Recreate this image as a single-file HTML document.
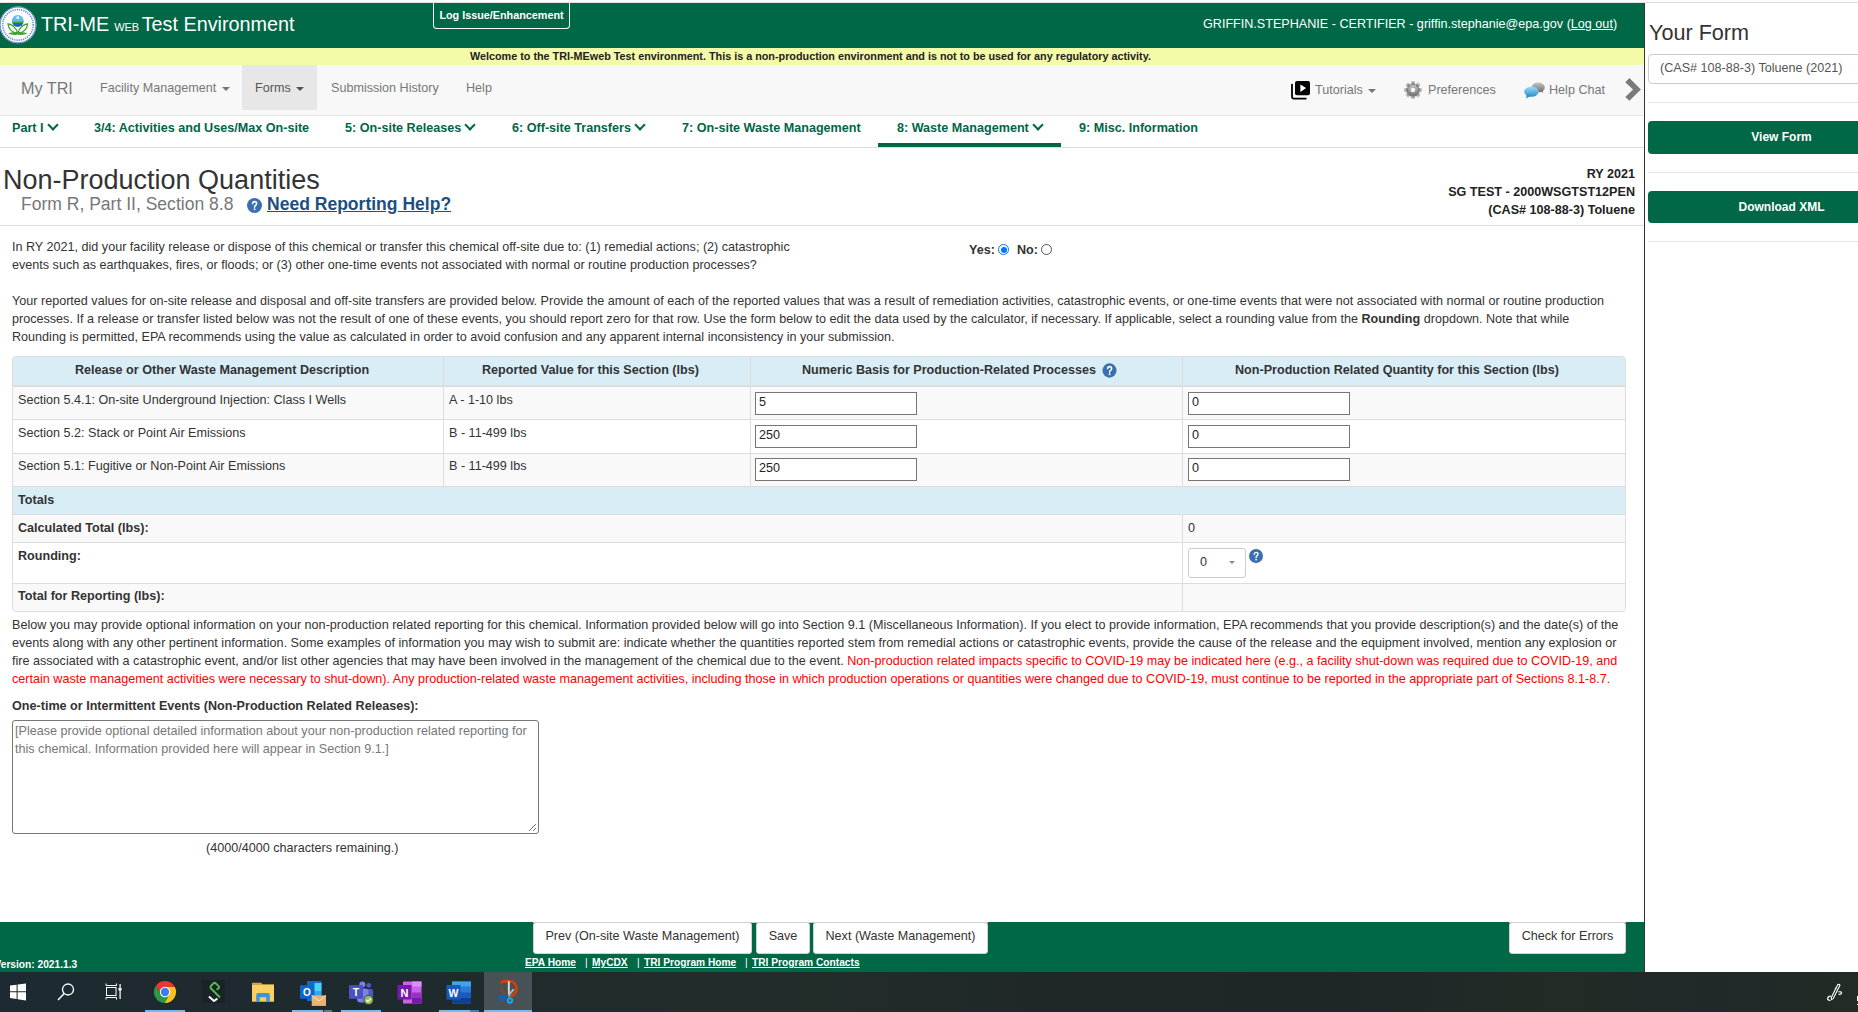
<!DOCTYPE html>
<html><head><meta charset="utf-8">
<style>
*{box-sizing:border-box}
html,body{margin:0;padding:0;width:1858px;height:1012px;overflow:hidden;background:#fff;font-family:"Liberation Sans",sans-serif;font-size:12.6px;color:#333}
.a{position:absolute;white-space:nowrap}
.g{background:#006747}
.b{font-weight:bold}
#topline{position:absolute;left:0;top:2px;width:1858px;height:1px;background:#e3e3e3}
#hdr{position:absolute;left:0;top:3px;width:1644px;height:45px;background:#006747}
#yel{position:absolute;left:0;top:48px;width:1644px;height:17px;background:#f4fba8;border-bottom-right-radius:3px}
#nav{position:absolute;left:0;top:65px;width:1644px;height:51px;background:#f8f8f8;border-bottom:1px solid #e7e7e7}
#tabs{position:absolute;left:0;top:116px;width:1644px;height:32px;background:#fff;border-bottom:1px solid #ddd}
.tab{position:absolute;top:121px;color:#00664a;font-weight:bold;font-size:12.6px}
.chev{display:inline-block;width:8px;height:8px;border-right:2.4px solid #00664a;border-bottom:2.4px solid #00664a;transform:rotate(45deg);margin-left:5px;position:relative;top:-3.5px}
#rp{position:absolute;left:1644px;top:3px;width:214px;height:969px;background:#fff;border-left:1px solid #333}
.hr{position:absolute;height:1px;background:#e5e5e5}
.gbtn{position:absolute;left:1648px;width:267px;height:33px;background:#006747;border-radius:4px;color:#fff;font-weight:bold;text-align:center;line-height:33px;font-size:12px}
table{border-collapse:collapse}
.inp{position:absolute;width:162px;height:23px;border:1px solid #767676;background:#fff;font-size:12.6px;padding:2px 3px;color:#222}
p{margin:0}
.wbtn{position:absolute;top:922px;height:32px;background:#fff;border:1px solid #d2d2d2;border-radius:3px;color:#333;text-align:center;line-height:27px;font-size:12.6px}
#foot{position:absolute;left:0;top:922px;width:1644px;height:50px;background:#006747}
#task{position:absolute;left:0;top:972px;width:1858px;height:40px;background:linear-gradient(90deg,#1d2a31 0%,#1f2a2e 22%,#222c29 44%,#1f2729 58%,#1f2628 72%,#232b26 84%,#20282a 92%,#232b25 100%)}
.flink{color:#fff;font-weight:bold;text-decoration:underline;font-size:10.2px}
</style></head><body>
<div id="topline"></div>
<div id="hdr"></div>
<!-- logo -->
<svg class="a" style="left:0;top:6px" width="38" height="38" viewBox="0 0 38 38">
<defs><clipPath id="gl"><circle cx="17.8" cy="14.9" r="6"/></clipPath></defs>
<circle cx="18" cy="18.9" r="18.4" fill="#fff"/>
<circle cx="18" cy="18.9" r="17.9" fill="none" stroke="#3d6fc0" stroke-width="0.9"/>
<circle cx="18" cy="18.9" r="15.3" fill="none" stroke="#6d92d0" stroke-width="1.7" stroke-dasharray="1.3 0.9"/>
<g clip-path="url(#gl)"><rect x="10" y="8" width="16" height="7.2" fill="#62bdf0"/><rect x="10" y="15.2" width="16" height="1.8" fill="#45a83c"/><rect x="10" y="17" width="16" height="5" fill="#1b68b8"/></g>
<circle cx="17.8" cy="11.6" r="1.4" fill="#fff"/>
<path d="M8 18 C11 18 16 21 17.6 27 C12 27 8.5 23 8 18z" fill="none" stroke="#3fa535" stroke-width="1.3"/>
<path d="M27.6 18 C24.6 18 19.6 21 18 27 C23.6 27 27.1 23 27.6 18z" fill="none" stroke="#3fa535" stroke-width="1.3"/>
<path d="M8 27.5 Q13 25.5 17.8 27 Q22.6 25.5 27.6 27.5 Q22.6 29.8 17.8 28.4 Q13 29.8 8 27.5z" fill="#3fa535"/>
</svg>
<div class="a" style="left:41px;top:13px;color:#fff;font-size:19.8px">TRI-ME<span style="font-size:11px;margin-left:5px">WEB</span><span style="margin-left:2.5px">Test Environment</span></div>
<div class="a" style="left:433px;top:3px;width:137px;height:26px;border:1px solid #fff;border-top:none;border-radius:0 0 4px 4px;color:#fff;font-weight:bold;font-size:10.8px;text-align:center;line-height:24px">Log Issue/Enhancement</div>
<div class="a" style="left:1203px;top:17px;color:#fff;font-size:12.6px">GRIFFIN.STEPHANIE - CERTIFIER - griffin.stephanie@epa.gov (<u>Log out</u>)</div>
<div id="yel"></div>
<div class="a b" style="left:470px;top:50px;font-size:10.8px;color:#222">Welcome to the TRI-MEweb Test environment. This is a non-production environment and is not to be used for any regulatory activity.</div>

<div id="nav"></div>
<div class="a" style="left:242px;top:65px;width:75px;height:45px;background:#e7e7e7"></div>
<div class="a" style="left:21px;top:79px;font-size:16.2px;color:#777">My TRI</div>
<div class="a" style="left:100px;top:81px;color:#777">Facility Management <span style="display:inline-block;border-top:4px solid #777;border-left:4px solid transparent;border-right:4px solid transparent;vertical-align:middle;margin-left:2px"></span></div>
<div class="a" style="left:255px;top:81px;color:#555">Forms <span style="display:inline-block;border-top:4px solid #555;border-left:4px solid transparent;border-right:4px solid transparent;vertical-align:middle;margin-left:2px"></span></div>
<div class="a" style="left:331px;top:81px;color:#777">Submission History</div>
<div class="a" style="left:466px;top:81px;color:#777">Help</div>
<!-- right nav -->
<svg class="a" style="left:1290px;top:80px" width="22" height="20" viewBox="0 0 22 20"><path d="M2 4.6 V16.5 Q2 18.6 4 18.6 H15.8" fill="none" stroke="#000" stroke-width="1.8" stroke-linecap="round"/><rect x="5" y="1" width="15" height="14.3" rx="2" fill="#000"/><path d="M10.4 4.4 L16.1 8.1 L10.4 11.9z" fill="#fff"/></svg>
<div class="a" style="left:1315px;top:83px;color:#777">Tutorials <span style="display:inline-block;border-top:4px solid #777;border-left:4px solid transparent;border-right:4px solid transparent;vertical-align:middle;margin-left:2px"></span></div>
<svg class="a" style="left:1404px;top:81px" width="18" height="18" viewBox="0 0 18 18"><defs><linearGradient id="gg" x1="0" y1="0" x2="0" y2="1"><stop offset="0" stop-color="#d0d0d0"/><stop offset="1" stop-color="#6e6e6e"/></linearGradient></defs><g fill="url(#gg)"><circle cx="9" cy="9" r="6.8"/><rect x="7.2" y="0" width="3.6" height="4" transform="rotate(0 9 9)"/><rect x="7.2" y="0" width="3.6" height="4" transform="rotate(45 9 9)"/><rect x="7.2" y="0" width="3.6" height="4" transform="rotate(90 9 9)"/><rect x="7.2" y="0" width="3.6" height="4" transform="rotate(135 9 9)"/><rect x="7.2" y="0" width="3.6" height="4" transform="rotate(180 9 9)"/><rect x="7.2" y="0" width="3.6" height="4" transform="rotate(225 9 9)"/><rect x="7.2" y="0" width="3.6" height="4" transform="rotate(270 9 9)"/><rect x="7.2" y="0" width="3.6" height="4" transform="rotate(315 9 9)"/></g><circle cx="9" cy="9" r="2.3" fill="#f6f6f6"/></svg>
<div class="a" style="left:1428px;top:83px;color:#777">Preferences</div>
<svg class="a" style="left:1522px;top:81px" width="26" height="20" viewBox="0 0 26 20"><defs><linearGradient id="cg" x1="0" y1="0" x2="0" y2="1"><stop offset="0" stop-color="#c4c4c4"/><stop offset="1" stop-color="#6f6f6f"/></linearGradient><linearGradient id="cb" x1="0" y1="0" x2="0" y2="1"><stop offset="0" stop-color="#9be0f5"/><stop offset="1" stop-color="#2b8ecb"/></linearGradient></defs><ellipse cx="16.2" cy="6.5" rx="6.6" ry="5" fill="url(#cg)"/><path d="M18 10 L21 12 L20.5 8z" fill="#777"/><ellipse cx="9.4" cy="10.6" rx="7.2" ry="5.2" fill="url(#cb)"/><path d="M5 13.5 L4 17.5 L9 14.8z" fill="#2b8ecb"/></svg>
<div class="a" style="left:1549px;top:83px;color:#777">Help Chat</div>
<svg class="a" style="left:1620px;top:75px" width="24" height="30" viewBox="0 0 24 30"><path d="M9.4 3.1 L20.9 14.4 L9.4 25.8 L5.3 21.9 L13 14.4 L5.3 7.3z" fill="#7a7a7a"/></svg>

<!-- tabs -->
<div id="tabs"></div>
<div class="tab a" style="left:12px">Part I<span class="chev"></span></div>
<div class="tab a" style="left:94px">3/4: Activities and Uses/Max On-site</div>
<div class="tab a" style="left:345px">5: On-site Releases<span class="chev"></span></div>
<div class="tab a" style="left:512px">6: Off-site Transfers<span class="chev"></span></div>
<div class="tab a" style="left:682px">7: On-site Waste Management</div>
<div class="tab a" style="left:897px">8: Waste Management<span class="chev"></span></div>
<div class="tab a" style="left:1079px">9: Misc. Information</div>
<div class="a" style="left:878px;top:143px;width:183px;height:4px;background:#006747"></div>

<!-- title -->
<div class="a" style="left:3px;top:165px;font-size:27px;color:#333">Non-Production Quantities</div>
<div class="a" style="left:21px;top:194px;font-size:17.55px;color:#777">Form R, Part II, Section 8.8</div>
<svg class="a" style="left:247px;top:198px" width="15" height="15" viewBox="0 0 15 15"><circle cx="7.5" cy="7.5" r="7.5" fill="#3b6fb0"/><path d="M5.6 5.6 Q5.8 3.6 7.6 3.6 Q9.6 3.6 9.6 5.4 Q9.6 6.5 8.5 7.3 Q7.6 7.9 7.6 9.2" fill="none" stroke="#fff" stroke-width="1.55" stroke-linecap="round"/><circle cx="7.6" cy="11.3" r="0.95" fill="#fff"/></svg>
<div class="a" style="left:267px;top:194px;font-size:17.55px;color:#1d4f82;font-weight:bold;text-decoration:underline">Need Reporting Help?</div>
<div class="a b" style="right:223px;top:165px;text-align:right;line-height:18px;color:#222">RY 2021<br>SG TEST - 2000WSGTST12PEN<br>(CAS# 108-88-3) Toluene</div>
<div class="hr" style="left:0;top:225px;width:1644px;background:#ddd"></div>

<div class="a" style="left:12px;top:238px;line-height:18px;color:#333">In RY 2021, did your facility release or dispose of this chemical or transfer this chemical off-site due to: (1) remedial actions; (2) catastrophic<br>events such as earthquakes, fires, or floods; or (3) other one-time events not associated with normal or routine production processes?</div>
<div class="a b" style="left:969px;top:243px;color:#333">Yes: <span style="display:inline-block;width:11px;height:11px;border-radius:50%;border:1px solid #0075ff;background:#fff;position:relative;top:1px;margin-right:4px"><span style="position:absolute;left:1.5px;top:1.5px;width:6px;height:6px;border-radius:50%;background:#0075ff"></span></span> No: <span style="display:inline-block;width:11px;height:11px;border-radius:50%;border:1px solid #555;background:#fff;position:relative;top:1px"></span></div>

<div class="a" style="left:12px;top:292px;line-height:18px;color:#333">Your reported values for on-site release and disposal and off-site transfers are provided below. Provide the amount of each of the reported values that was a result of remediation activities, catastrophic events, or one-time events that were not associated with normal or routine production<br>processes. If a release or transfer listed below was not the result of one of these events, you should report zero for that row. Use the form below to edit the data used by the calculator, if necessary. If applicable, select a rounding value from the <b>Rounding</b> dropdown. Note that while<br>Rounding is permitted, EPA recommends using the value as calculated in order to avoid confusion and any apparent internal inconsistency in your submission.</div>

<!-- table -->
<div class="a" style="left:12px;top:356px;width:1614px;height:256px;border:1px solid #ddd;border-radius:4px;background:#fff;overflow:hidden">
<div style="position:absolute;left:0;top:0;width:1612px;height:30px;background:#d9edf7;border-bottom:2px solid #ddd"></div>
<div style="position:absolute;left:0;top:30px;width:1612px;height:33px;background:#f9f9f9;border-bottom:1px solid #ddd"></div>
<div style="position:absolute;left:0;top:63px;width:1612px;height:34px;background:#fff;border-bottom:1px solid #ddd"></div>
<div style="position:absolute;left:0;top:97px;width:1612px;height:33px;background:#f9f9f9;border-bottom:1px solid #ddd"></div>
<div style="position:absolute;left:0;top:130px;width:1612px;height:28px;background:#d9edf7;border-bottom:1px solid #ddd"></div>
<div style="position:absolute;left:0;top:158px;width:1612px;height:28px;background:#f9f9f9;border-bottom:1px solid #ddd"></div>
<div style="position:absolute;left:0;top:186px;width:1612px;height:41px;background:#fff;border-bottom:1px solid #ddd"></div>
<div style="position:absolute;left:0;top:227px;width:1612px;height:27px;background:#f9f9f9"></div>
</div>
<!-- col lines -->
<div class="a" style="left:443px;top:357px;width:1px;height:129px;background:#ddd"></div>
<div class="a" style="left:750px;top:357px;width:1px;height:129px;background:#ddd"></div>
<div class="a" style="left:1182px;top:357px;width:1px;height:129px;background:#ddd"></div>
<div class="a" style="left:1182px;top:515px;width:1px;height:96px;background:#ddd"></div>

<div class="a b" style="left:75px;top:363px">Release or Other Waste Management Description</div>
<div class="a b" style="left:482px;top:363px">Reported Value for this Section (lbs)</div>
<div class="a b" style="left:802px;top:363px">Numeric Basis for Production-Related Processes</div>
<svg class="a" style="left:1102px;top:363px" width="15" height="15" viewBox="0 0 15 15"><ellipse cx="7.5" cy="7.5" rx="7" ry="7.2" fill="#3b6fb0"/><path d="M5.6 5.6 Q5.8 3.6 7.6 3.6 Q9.6 3.6 9.6 5.4 Q9.6 6.5 8.5 7.3 Q7.6 7.9 7.6 9.2" fill="none" stroke="#fff" stroke-width="1.55" stroke-linecap="round"/><circle cx="7.6" cy="11.3" r="0.95" fill="#fff"/></svg>
<div class="a b" style="left:1235px;top:363px">Non-Production Related Quantity for this Section (lbs)</div>

<div class="a" style="left:18px;top:393px">Section 5.4.1: On-site Underground Injection: Class I Wells</div>
<div class="a" style="left:449px;top:393px">A - 1-10 lbs</div>
<div class="inp" style="left:755px;top:392px">5</div>
<div class="inp" style="left:1188px;top:392px">0</div>
<div class="a" style="left:18px;top:426px">Section 5.2: Stack or Point Air Emissions</div>
<div class="a" style="left:449px;top:426px">B - 11-499 lbs</div>
<div class="inp" style="left:755px;top:425px">250</div>
<div class="inp" style="left:1188px;top:425px">0</div>
<div class="a" style="left:18px;top:459px">Section 5.1: Fugitive or Non-Point Air Emissions</div>
<div class="a" style="left:449px;top:459px">B - 11-499 lbs</div>
<div class="inp" style="left:755px;top:458px">250</div>
<div class="inp" style="left:1188px;top:458px">0</div>

<div class="a b" style="left:18px;top:493px">Totals</div>
<div class="a b" style="left:18px;top:521px">Calculated Total (lbs):</div>
<div class="a" style="left:1188px;top:521px">0</div>
<div class="a b" style="left:18px;top:549px">Rounding:</div>
<div class="a" style="left:1188px;top:548px;width:58px;height:30px;border:1px solid #ccc;border-radius:3px;background:#fff;padding:6px 0 0 11px;color:#333">0<span style="position:absolute;left:39.5px;top:12px;border-top:3.5px solid #888;border-left:3.5px solid transparent;border-right:3.5px solid transparent"></span></div>
<svg class="a" style="left:1249px;top:549px" width="14" height="14" viewBox="0 0 14 14"><circle cx="7" cy="7" r="7" fill="#3b6fb0"/><g transform="scale(0.933)"><path d="M5.6 5.6 Q5.8 3.6 7.6 3.6 Q9.6 3.6 9.6 5.4 Q9.6 6.5 8.5 7.3 Q7.6 7.9 7.6 9.2" fill="none" stroke="#fff" stroke-width="1.55" stroke-linecap="round"/><circle cx="7.6" cy="11.3" r="0.95" fill="#fff"/></g></svg>
<div class="a b" style="left:18px;top:589px">Total for Reporting (lbs):</div>

<div class="a" style="left:12px;top:616px;line-height:18px;color:#333">Below you may provide optional information on your non-production related reporting for this chemical. Information provided below will go into Section 9.1 (Miscellaneous Information). If you elect to provide information, EPA recommends that you provide description(s) and the date(s) of the<br>events along with any other pertinent information. Some examples of information you may wish to submit are: indicate whether the quantities reported stem from remedial actions or catastrophic events, provide the cause of the release and the equipment involved, mention any explosion or<br>fire associated with a catastrophic event, and/or list other agencies that may have been involved in the management of the chemical due to the event. <span style="color:#f00">Non-production related impacts specific to COVID-19 may be indicated here (e.g., a facility shut-down was required due to COVID-19, and</span><br><span style="color:#f00">certain waste management activities were necessary to shut-down). Any production-related waste management activities, including those in which production operations or quantities were changed due to COVID-19, must continue to be reported in the appropriate part of Sections 8.1-8.7.</span></div>

<div class="a b" style="left:12px;top:699px">One-time or Intermittent Events (Non-Production Related Releases):</div>
<div class="a" style="left:12px;top:720px;width:527px;height:114px;border:1px solid #767676;border-radius:3px;background:#fff;padding:1px 2px;line-height:18px;color:#777;white-space:normal">[Please provide optional detailed information about your non-production related reporting for this chemical. Information provided here will appear in Section 9.1.]
<svg style="position:absolute;right:1px;bottom:1px" width="9" height="9" viewBox="0 0 9 9"><path d="M8 1 L1 8 M8 5 L5 8" stroke="#777" stroke-width="1"/></svg></div>
<div class="a" style="left:206px;top:841px">(4000/4000 characters remaining.)</div>

<!-- footer -->
<div id="foot"></div>
<div class="a" style="left:533px;top:922px;width:455px;height:1px;background:#c9c9c9"></div>
<div class="a" style="left:1509px;top:922px;width:117px;height:1px;background:#c9c9c9"></div>
<div class="wbtn" style="left:533px;width:219px">Prev (On-site Waste Management)</div>
<div class="wbtn" style="left:756px;width:54px">Save</div>
<div class="wbtn" style="left:813px;width:175px">Next (Waste Management)</div>
<div class="wbtn" style="left:1509px;width:117px">Check for Errors</div>
<div class="a flink" style="left:525px;top:957px">EPA Home</div>
<div class="a" style="left:585px;top:957px;color:#fff;font-size:10.2px">|</div>
<div class="a flink" style="left:592px;top:957px">MyCDX</div>
<div class="a" style="left:637px;top:957px;color:#fff;font-size:10.2px">|</div>
<div class="a flink" style="left:644px;top:957px">TRI Program Home</div>
<div class="a" style="left:745px;top:957px;color:#fff;font-size:10.2px">|</div>
<div class="a flink" style="left:752px;top:957px">TRI Program Contacts</div>
<div class="a b" style="left:-5.5px;top:959px;color:#fff;font-size:10.2px">Version: 2021.1.3</div>

<!-- right panel -->
<div id="rp"></div>
<div class="hr" style="left:1645px;top:2px;width:213px;background:#ddd"></div>
<div class="a" style="left:1649px;top:20px;font-size:21.6px;color:#333">Your Form</div>
<div class="a" style="left:1648px;top:54px;width:230px;height:30px;border:1px solid #ccc;border-radius:4px;background:#fff;padding:6px 0 0 11px;color:#555">(CAS# 108-88-3) Toluene (2021)</div>
<div class="hr" style="left:1648px;top:102px;width:210px"></div>
<div class="gbtn" style="top:121px">View Form</div>
<div class="hr" style="left:1648px;top:172px;width:210px"></div>
<div class="gbtn" style="top:191px;height:32px;line-height:32px">Download XML</div>
<div class="hr" style="left:1648px;top:241px;width:210px"></div>

<!-- taskbar -->
<div id="task"></div>
<!-- windows logo -->
<svg class="a" style="left:9px;top:983px" width="18" height="18" viewBox="0 0 18 18"><path d="M1 2.6 L7.6 1.7 V8.3 H1z M8.6 1.5 L17 0.4 V8.3 H8.6z M1 9.3 H7.6 V16 L1 15.1z M8.6 9.3 H17 V17.4 L8.6 16.2z" fill="#fff"/></svg>
<!-- search -->
<svg class="a" style="left:56px;top:982px" width="20" height="20" viewBox="0 0 20 20"><circle cx="12" cy="7.5" r="5.5" fill="none" stroke="#fff" stroke-width="1.3"/><path d="M8.2 11.5 L2 18" stroke="#fff" stroke-width="1.5"/></svg>
<!-- task view -->
<svg class="a" style="left:105px;top:983px" width="18" height="17" viewBox="0 0 18 17"><path d="M1 0.5 v2 h10.5 v-2 M1 16.5 v-2 h10.5 v2" fill="none" stroke="#fff" stroke-width="1"/><rect x="1.5" y="4.5" width="9.5" height="8" fill="none" stroke="#fff" stroke-width="1"/><rect x="14.5" y="1" width="1.2" height="15" fill="#fff"/><rect x="13.5" y="5" width="3" height="2.5" fill="#fff"/></svg>
<!-- chrome -->
<svg class="a" style="left:153px;top:980px" width="24" height="24" viewBox="0 0 24 24">
<path d="M12 12 L12 7 L21.8 7 A11 11 0 0 0 2.77 6 L7.67 14.5 Z" fill="#e33b2e"/>
<path d="M12 12 L16.33 14.5 L11.43 23 A11 11 0 0 0 21.8 7 L12 7 Z" fill="#fcc21b"/>
<path d="M12 12 L7.67 14.5 L2.77 6 A11 11 0 0 0 11.43 23 L16.33 14.5 Z" fill="#2a9a48"/>
<circle cx="12" cy="12" r="5.2" fill="#fff"/><circle cx="12" cy="12" r="4.2" fill="#3b7ee9"/></svg>
<div class="a" style="left:145px;top:1010px;width:40px;height:2px;background:#76b9ed"></div>
<!-- green app -->
<div class="a" style="left:202px;top:980px;width:23px;height:23px;background:#1a2228;border-radius:2px"></div>
<svg class="a" style="left:202px;top:980px" width="24" height="24" viewBox="0 0 24 24"><path d="M18 17.5 L9.3 8.8 Q7.6 7.2 9.3 5.5 L11.2 3.6 Q12.6 2.2 14 3.6 L16.3 5.9 Q17.8 7.4 16.3 8.5 L14.6 9.6" fill="none" stroke="#58b947" stroke-width="2" stroke-linejoin="round"/><path d="M6.9 16.6 L12 21 L15.3 18.6" fill="none" stroke="#fff" stroke-width="2" stroke-linejoin="round"/></svg>
<!-- folder -->
<svg class="a" style="left:251px;top:982px" width="24" height="21" viewBox="0 0 24 21"><path d="M1 0.8 H10 L11.8 2.4 H1z" fill="#e2a50f"/><rect x="1" y="2.4" width="22" height="17.3" fill="#fbd062"/><path d="M5.2 19.7 V13 Q5.2 11 7.2 11 H16.8 Q18.8 11 18.8 13 V19.7 H15.2 V15.2 H8.8 V19.7z" fill="#3d95dc"/></svg>
<!-- outlook -->
<svg class="a" style="left:300px;top:980px" width="27" height="27" viewBox="0 0 27 27"><rect x="7" y="1" width="14.5" height="20" fill="#0f6cc9"/><rect x="14.5" y="3" width="7" height="8" fill="#4fd1f7"/><rect x="14.5" y="11" width="7" height="5" fill="#2fa9ec"/><rect x="0" y="5.2" width="14" height="13.6" fill="#0a67c9"/><text x="7" y="15.6" font-family="Liberation Sans" font-weight="bold" font-size="10" fill="#fff" text-anchor="middle">O</text><rect x="11.7" y="15.4" width="14.3" height="10.5" fill="#e6b574"/><path d="M11.7 15.4 L18.85 21 L26 15.4" fill="none" stroke="#fbe3bd" stroke-width="1"/></svg>
<div class="a" style="left:292px;top:1010px;width:31px;height:2px;background:#76b9ed"></div><div class="a" style="left:324px;top:1010px;width:8px;height:2px;background:#4a7ca6"></div>
<!-- teams -->
<svg class="a" style="left:348px;top:981px" width="27" height="25" viewBox="0 0 27 25"><circle cx="14.3" cy="3.4" r="3" fill="#7b83eb"/><circle cx="20.7" cy="4.3" r="2.4" fill="#5059c9"/><rect x="16.5" y="8" width="8.6" height="10" rx="2" fill="#5059c9"/><rect x="9" y="7.5" width="11.5" height="14" rx="3.5" fill="#7b83eb"/><rect x="1" y="4.2" width="14" height="13.6" fill="#4b53bc"/><text x="8" y="14.8" font-family="Liberation Sans" font-weight="bold" font-size="10.5" fill="#fff" text-anchor="middle">T</text><circle cx="20.6" cy="18.9" r="4.6" fill="#92c353" stroke="#2a3236" stroke-width="0.8"/><path d="M18.3 18.9 l1.6 1.6 l3.1 -3.1" fill="none" stroke="#fff" stroke-width="1.3"/></svg>
<div class="a" style="left:341px;top:1010px;width:40px;height:2px;background:#76b9ed"></div>
<!-- onenote -->
<svg class="a" style="left:397px;top:981px" width="26" height="23" viewBox="0 0 26 23"><rect x="6" y="0.5" width="18.5" height="22" fill="#ca64ea"/><rect x="15" y="0.5" width="9.5" height="5" fill="#e08df5"/><rect x="15" y="11.5" width="9.5" height="5.5" fill="#9332bf"/><rect x="15" y="17" width="9.5" height="5.5" fill="#7719aa"/><rect x="0.5" y="4" width="14" height="14.5" fill="#7719aa"/><text x="7.5" y="15.5" font-family="Liberation Sans" font-weight="bold" font-size="11" fill="#fff" text-anchor="middle">N</text></svg>
<!-- word -->
<svg class="a" style="left:446px;top:981px" width="26" height="23" viewBox="0 0 26 23"><rect x="6" y="0.5" width="19" height="22" fill="#2b7cd3"/><rect x="6" y="0.5" width="19" height="5" fill="#41a5ee"/><rect x="6" y="11.5" width="19" height="5.5" fill="#185abd"/><rect x="6" y="17" width="19" height="5.5" fill="#103f91"/><rect x="0.5" y="4" width="14" height="14.5" fill="#185abd"/><text x="7.5" y="15.5" font-family="Liberation Sans" font-weight="bold" font-size="10.5" fill="#fff" text-anchor="middle">W</text></svg>
<div class="a" style="left:439px;top:1010px;width:31px;height:2px;background:#76b9ed"></div>
<div class="a" style="left:470px;top:1010px;width:9px;height:2px;background:#4a7ca6"></div>
<!-- snip (active) -->
<div class="a" style="left:484px;top:972px;width:48px;height:40px;background:#485256"></div>
<svg class="a" style="left:490px;top:975px" width="40" height="34" viewBox="0 0 40 34"><path d="M10.5 8 Q14 5.5 19.4 6 A7.8 7.8 0 0 1 20 21.5" fill="none" stroke="#dc3c05" stroke-width="2.6"/><path d="M11.5 11.5 Q11.5 17 15.5 20" fill="none" stroke="#c83a0a" stroke-width="1"/><path d="M17.8 6.5 Q18.5 5.6 19.8 6 V21 H18 z" fill="#dadada"/><path d="M18.8 20 L23.8 14.2" stroke="#b4b4b4" stroke-width="2"/><circle cx="12" cy="23" r="2.2" fill="none" stroke="#0b64c6" stroke-width="1.9"/><circle cx="20" cy="25.6" r="2.2" fill="none" stroke="#1ba9f0" stroke-width="1.9"/><path d="M14 22 L18.5 20.5" stroke="#0b64c6" stroke-width="1.6"/><path d="M19 21 V23.5" stroke="#1ba9f0" stroke-width="1.6"/></svg>
<div class="a" style="left:484px;top:1010px;width:48px;height:2px;background:#76b9ed"></div>
<!-- pen icon right -->
<svg class="a" style="left:1820px;top:980px" width="38" height="26" viewBox="0 0 38 26"><path d="M17.8 4.6 Q19.2 4 20 5.2 L13.2 18.6 L11.6 19.6 L11.2 17.8 z" fill="none" stroke="#fff" stroke-width="1.1" stroke-linejoin="round"/><path d="M10.8 16.2 Q7.6 16.6 7.6 18.6 Q7.8 20.6 10.6 20.3" fill="none" stroke="#fff" stroke-width="1.3"/><path d="M18.2 12 Q21.4 11.2 21.6 13 Q21.4 14.6 18.6 14.3" fill="none" stroke="#fff" stroke-width="1.2"/><path d="M14.8 8.6 L16.2 7.2 M15.6 9.6 L17 8.2" stroke="#ddd" stroke-width="0.8"/><rect x="37" y="16" width="1" height="5" fill="#fff"/><rect x="37" y="24" width="1" height="1" fill="#fff"/></svg>
</body></html>
